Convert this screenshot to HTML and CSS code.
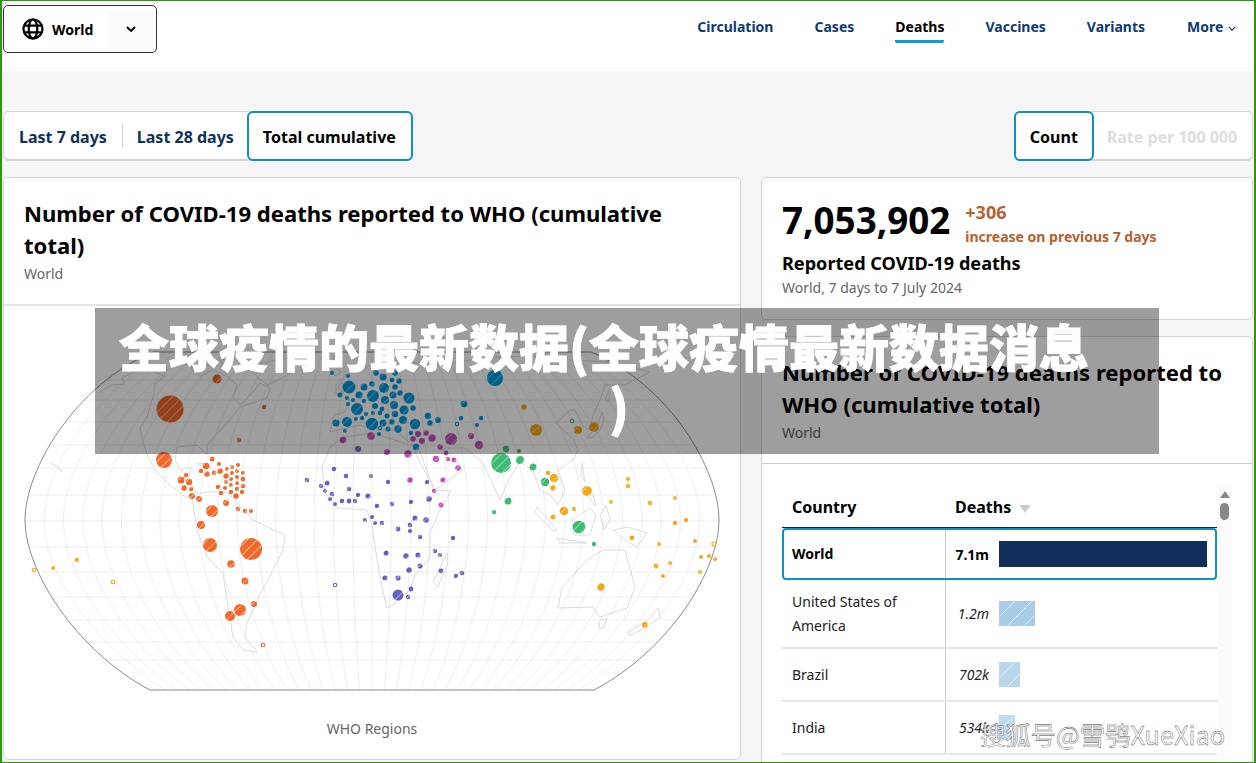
FILE: index.html
```html
<!DOCTYPE html>
<html lang="en">
<head>
<meta charset="utf-8">
<title>COVID-19 deaths</title>
<link rel="stylesheet" href="styles.css">
</head>
<body>
<div class="frame">
  <header class="topbar">
    <div class="select">
      <svg class="globe" viewBox="0 0 22 22" width="22" height="22"><circle cx="11" cy="11" r="9.5"/><ellipse cx="11" cy="11" rx="4.3" ry="9.5"/><path d="M2 7.7h18M2 14.3h18"/></svg>
      <span class="select-label">World</span>
      <span class="select-btn"><svg class="chev" viewBox="0 0 10 6" width="10" height="6"><path d="M1 1l4 4 4-4"/></svg></span>
    </div>
    <nav class="nav">
      <a class="nav-item">Circulation</a>
      <a class="nav-item">Cases</a>
      <a class="nav-item active">Deaths</a>
      <a class="nav-item">Vaccines</a>
      <a class="nav-item">Variants</a>
      <a class="nav-item">More <svg class="chev small" viewBox="0 0 10 6" width="8" height="5"><path d="M1 1l4 4 4-4"/></svg></a>
    </nav>
  </header>
  <main class="main">
    <div class="controls">
      <div class="seg">
        <span class="seg-item link">Last 7 days</span>
        <span class="seg-sep"></span>
        <span class="seg-item link second">Last 28 days</span>
        <span class="seg-item on total">Total cumulative</span>
      </div>
      <div class="seg">
        <span class="seg-item on count">Count</span>
        <span class="seg-item off">Rate per 100 000</span>
      </div>
    </div>
    <div class="columns">
      <section class="card map-card">
        <div class="card-head">
          <h2 class="card-title">Number of COVID-19 deaths reported to WHO (cumulative total)</h2>
          <p class="card-sub">World</p>
        </div>
        <svg class="map" viewBox="4 306 736 410" width="736" height="410">
          <defs>
            <clipPath id="globe-clip"><path d="M153 352H591C670 385 719 470 719 520S670 650 594 690H150C75 650 25 570 25 520S75 385 153 352Z"/></clipPath>
            <pattern id="amro" patternUnits="userSpaceOnUse" width="7" height="7" patternTransform="rotate(45)"><rect width="7" height="7" fill="#f26829"/><path d="M3.5 0V7" stroke="#fff" stroke-opacity=".55" stroke-width=".9"/></pattern>
            <pattern id="euro" patternUnits="userSpaceOnUse" width="7" height="7" patternTransform="rotate(45)"><rect width="7" height="7" fill="#009ade"/><path d="M3.5 0V7" stroke="#fff" stroke-opacity=".45" stroke-width=".9"/></pattern>
            <pattern id="emro" patternUnits="userSpaceOnUse" width="7" height="7" patternTransform="rotate(45)"><rect width="7" height="7" fill="#c04ebb"/><path d="M3.5 0V7" stroke="#fff" stroke-opacity=".45" stroke-width=".9"/></pattern>
            <pattern id="afro" patternUnits="userSpaceOnUse" width="7" height="7" patternTransform="rotate(45)"><rect width="7" height="7" fill="#6460c4"/><path d="M3.5 0V7" stroke="#fff" stroke-opacity=".5" stroke-width=".9"/></pattern>
            <pattern id="searo" patternUnits="userSpaceOnUse" width="7" height="7" patternTransform="rotate(45)"><rect width="7" height="7" fill="#3dbb72"/><path d="M3.5 0V7" stroke="#fff" stroke-opacity=".5" stroke-width=".9"/></pattern>
            <pattern id="wpro" patternUnits="userSpaceOnUse" width="7" height="7" patternTransform="rotate(45)"><rect width="7" height="7" fill="#f6a81c"/><path d="M3.5 0V7" stroke="#fff" stroke-opacity=".45" stroke-width=".9"/></pattern>
          </defs>
          <g clip-path="url(#globe-clip)">
            <path class="grid" d="M25 380H719M25 400H719M25 422H719M25 445H719M25 468H719M25 495H719M25 521H719M25 547H719M25 572H719M25 597H719M25 620H719M25 642H719M25 660H719"/>
            <g class="grid" transform="translate(372 520)">
              <path d="M0-168V170"/>
              <g id="meridians">
                <path d="M12.2-168C16.7-120 19.3-50 19.3 0S16.7 120 12.2 170"/>
                <path d="M24.3-168C33.3-120 38.6-50 38.6 0S33.3 120 24.3 170"/>
                <path d="M36.5-168C50-120 57.8-50 57.8 0S50 120 36.5 170"/>
                <path d="M48.7-168C66.7-120 77.1-50 77.1 0S66.7 120 48.7 170"/>
                <path d="M60.9-168C83.4-120 96.4-50 96.4 0S83.4 120 60.9 170"/>
                <path d="M73-168C100-120 115.7-50 115.7 0S100 120 73 170"/>
                <path d="M85.2-168C116.7-120 135-50 135 0S116.7 120 85.2 170"/>
                <path d="M97.4-168C133.4-120 154.2-50 154.2 0S133.4 120 97.4 170"/>
                <path d="M109.5-168C150-120 173.5-50 173.5 0S150 120 109.5 170"/>
                <path d="M121.7-168C166.7-120 192.8-50 192.8 0S166.7 120 121.7 170"/>
                <path d="M133.9-168C183.4-120 212.1-50 212.1 0S183.4 120 133.9 170"/>
                <path d="M146-168C200-120 231.4-50 231.4 0S200 120 146 170"/>
                <path d="M158.2-168C216.7-120 250.6-50 250.6 0S216.7 120 158.2 170"/>
                <path d="M170.4-168C233.4-120 269.9-50 269.9 0S233.4 120 170.4 170"/>
                <path d="M182.6-168C250-120 289.2-50 289.2 0S250 120 182.6 170"/>
                <path d="M194.7-168C266.7-120 308.5-50 308.5 0S266.7 120 194.7 170"/>
                <path d="M206.9-168C283.4-120 327.8-50 327.8 0S283.4 120 206.9 170"/>
              </g>
              <use href="#meridians" transform="scale(-1 1)"/>
            </g>
          </g>
          <path class="outline" d="M153 352H591C670 385 719 470 719 520S670 650 594 690H150C75 650 25 570 25 520S75 385 153 352Z"/>
          <g class="land">
            <path d="M100 392L112 385 125 384 122 378 135 371 150 370 165 376 155 384 153 397 147 417 140 428 143 442 148 457 157 472 170 485 185 497 192 498 197 530 207 557 223 573 227 600 233 637 243 650 257 652 245 637 247 623 257 600 268 580 283 550 285 535 253 520 227 492 207 492 197 494 188 480 191 467 180 470 175 460 177 447 197 445 207 455 207 445 227 423 240 407 267 398 270 388 260 383 253 392 240 405 233 397 237 385 225 375 213 370 200 376 185 362 170 365"/>
            <path d="M198 464L205 463 212 468 204 467ZM213 470L221 471 218 474ZM250 365L290 358 293 372 268 385 258 378ZM180 362L205 358 215 364 195 368ZM220 360L240 358 244 368 226 368ZM56 466L62 470 61 472M56 466L50 463"/>
            <path d="M322 467L330 447 345 437 372 433 395 440 415 447 420 452 434 490 451 491 440 510 430 533 430 558 415 575 410 590 393 605 387 608 382 587 375 547 372 525 367 510 337 508 325 493Z"/>
            <path d="M330 432L334 415 345 412 350 400 338 388 345 375 372 365 395 360 440 366 480 358 530 356 570 360 610 362 650 372 625 385 605 385 600 400 593 415 590 430 583 426 575 410 570 410 556 423 574 440 578 450 573 460 558 470 565 490 558 505 550 495 540 490 533 470 520 462 510 477 500 500 483 463 465 448 440 448 453 457 463 470 435 490 415 453 415 447 395 430 372 430 360 425Z"/>
            <path d="M587 437L596 428 602 412 604 420 600 430 592 438ZM605 400L609 390 609 402ZM447 553L433 582 438 587 448 563ZM562 587L587 560 603 550 625 550 635 587 627 608 600 617 593 607 558 608ZM600 620L607 619 604 628 599 628ZM658 608L660 618 650 624 630 636 628 632 648 620ZM537 507L557 530 553 531 535 512ZM557 538L587 543 560 543ZM572 520L590 508 596 515 590 535 574 535ZM600 515L606 505 610 520 604 530ZM613 530L628 527 647 533 637 547 622 538ZM581 475L582 463 585 482ZM585 490L593 494 596 506 590 500ZM506 498L510 502 507 505ZM336 385L341 378 344 392 336 394ZM330 372L337 369 341 372 336 376Z"/>
          </g>
          <g fill="url(#amro)">
            <circle cx="217" cy="379" r="4.5"/><circle cx="170" cy="409" r="13.5"/><circle cx="264" cy="407" r="2.2"/><circle cx="239" cy="440" r="2.2"/><circle cx="164" cy="460" r="8"/><circle cx="212" cy="459" r="2.5"/><circle cx="219" cy="464" r="2"/><circle cx="206" cy="466" r="3.3"/><circle cx="238" cy="465" r="2"/><circle cx="232" cy="467" r="2"/><circle cx="227" cy="469" r="2"/><circle cx="201" cy="471" r="2.2"/><circle cx="220" cy="471" r="2.7"/><circle cx="237" cy="471" r="2"/><circle cx="243" cy="473" r="2"/><circle cx="207" cy="474" r="2.7"/><circle cx="214" cy="473" r="2.3"/><circle cx="226" cy="476" r="2.7"/><circle cx="232" cy="473" r="2"/><circle cx="237" cy="477" r="2"/><circle cx="231" cy="479" r="2"/><circle cx="243" cy="479" r="2.3"/><circle cx="186" cy="475" r="2.3"/><circle cx="181" cy="480" r="3.5"/><circle cx="189" cy="482" r="3.2"/><circle cx="226" cy="482" r="2"/><circle cx="237" cy="483" r="2"/><circle cx="231" cy="485" r="2"/><circle cx="243" cy="486" r="2.3"/><circle cx="184" cy="488" r="2.7"/><circle cx="191" cy="489" r="2.2"/><circle cx="218" cy="487" r="2.3"/><circle cx="225" cy="488" r="2"/><circle cx="237" cy="489" r="2.2"/><circle cx="231" cy="492" r="2.2"/><circle cx="242" cy="492" r="2.2"/><circle cx="221" cy="493" r="2.2"/><circle cx="236" cy="496" r="2.7"/><circle cx="192" cy="496" r="3"/><circle cx="199" cy="499" r="3"/><circle cx="226" cy="503" r="3"/><circle cx="212" cy="511" r="6"/><circle cx="238" cy="509" r="2.3"/><circle cx="245" cy="511" r="2.2"/><circle cx="251" cy="511" r="2"/><circle cx="201" cy="525" r="4"/><circle cx="210" cy="545" r="7"/><circle cx="251" cy="549" r="11"/><circle cx="231" cy="564" r="3.7"/><circle cx="245" cy="581" r="3.5"/><circle cx="254" cy="604" r="3"/><circle cx="240" cy="610" r="6"/><circle cx="230" cy="616" r="5"/>
          </g>
          <g fill="url(#afro)">
            <circle cx="358" cy="449" r="3"/><circle cx="334" cy="469" r="2.3"/><circle cx="346" cy="476" r="2.3"/><circle cx="371" cy="476" r="2"/><circle cx="307" cy="480" r="2.3"/><circle cx="327" cy="483" r="2.5"/><circle cx="321" cy="486" r="2.2"/><circle cx="349" cy="489" r="2.3"/><circle cx="325" cy="491" r="2"/><circle cx="332" cy="494" r="2.3"/><circle cx="358" cy="495" r="2.2"/><circle cx="368" cy="496" r="2.6"/><circle cx="330" cy="499" r="2"/><circle cx="342" cy="501" r="2.3"/><circle cx="349" cy="501" r="2.4"/><circle cx="355" cy="501" r="2.2"/><circle cx="335" cy="504" r="2"/><circle cx="377" cy="506" r="2.3"/><circle cx="372" cy="517" r="2.1"/><circle cx="365" cy="520" r="2.1"/><circle cx="375" cy="523" r="2.1"/><circle cx="388" cy="482" r="2.2"/><circle cx="427" cy="482" r="2.2"/><circle cx="429" cy="499" r="2.8"/><circle cx="392" cy="504" r="2.2"/><circle cx="411" cy="502" r="2.2"/><circle cx="415" cy="518" r="2.6"/><circle cx="426" cy="520" r="2.8"/><circle cx="382" cy="523" r="2.2"/><circle cx="410" cy="525" r="2.3"/><circle cx="398" cy="529" r="2.4"/><circle cx="410" cy="531" r="2.1"/><circle cx="420" cy="537" r="2.3"/><circle cx="453" cy="538" r="2.2"/><circle cx="386" cy="553" r="2.5"/><circle cx="406" cy="556" r="2.7"/><circle cx="418" cy="555" r="2.6"/><circle cx="435" cy="551" r="2.2"/><circle cx="440" cy="555" r="2.1"/><circle cx="420" cy="566" r="2.5"/><circle cx="409" cy="570" r="2.8"/><circle cx="441" cy="571" r="2.4"/><circle cx="462" cy="573" r="2.3"/><circle cx="456" cy="576" r="2.2"/><circle cx="385" cy="578" r="2.6"/><circle cx="398" cy="578" r="2.6"/><circle cx="411" cy="589" r="2.4"/><circle cx="398" cy="595" r="5.5"/><circle cx="408" cy="597" r="2.2"/>
          </g>
          <g fill="url(#emro)">
            <circle cx="387" cy="452" r="3"/><circle cx="408" cy="454" r="3.7"/><circle cx="436" cy="459" r="3.2"/><circle cx="448" cy="459" r="2.2"/><circle cx="454" cy="460" r="2.5"/><circle cx="458" cy="468" r="2.8"/><circle cx="443" cy="480" r="2.6"/><circle cx="410" cy="480" r="2.8"/><circle cx="434" cy="491" r="2.2"/><circle cx="441" cy="505" r="2.5"/><circle cx="440" cy="447" r="2.7"/><circle cx="446" cy="453" r="2.4"/><circle cx="479" cy="445" r="4"/><circle cx="451" cy="439" r="6"/><circle cx="471" cy="436" r="3"/><circle cx="432" cy="438" r="3.7"/><circle cx="426" cy="433" r="2.7"/><circle cx="418" cy="434" r="3"/><circle cx="413" cy="439" r="2.8"/><circle cx="422" cy="441" r="3"/><circle cx="371" cy="436" r="3.7"/><circle cx="343" cy="440" r="3.3"/>
          </g>
          <g fill="url(#euro)">
            <circle cx="332" cy="373" r="2"/><circle cx="348" cy="376" r="2"/><circle cx="376" cy="373" r="2.8"/><circle cx="383" cy="377" r="3.5"/><circle cx="395" cy="373" r="2.8"/><circle cx="392" cy="380" r="2.3"/><circle cx="399" cy="381" r="2.7"/><circle cx="349" cy="387" r="6.5"/><circle cx="364" cy="387" r="3.5"/><circle cx="372" cy="384" r="2.7"/><circle cx="384" cy="388" r="5"/><circle cx="395" cy="387" r="2.8"/><circle cx="400" cy="393" r="2.7"/><circle cx="409" cy="398" r="5.5"/><circle cx="359" cy="395" r="3.5"/><circle cx="373" cy="396" r="6"/><circle cx="393" cy="395" r="3.5"/><circle cx="340" cy="395" r="2.5"/><circle cx="347" cy="398" r="2.1"/><circle cx="353" cy="400" r="2"/><circle cx="364" cy="401" r="2.2"/><circle cx="385" cy="400" r="4"/><circle cx="375" cy="406" r="3"/><circle cx="348" cy="404" r="2.1"/><circle cx="357" cy="409" r="6"/><circle cx="394" cy="405" r="4"/><circle cx="413" cy="408" r="2.8"/><circle cx="404" cy="410" r="4.5"/><circle cx="382" cy="409" r="2.4"/><circle cx="373" cy="413" r="2.1"/><circle cx="366" cy="414" r="2"/><circle cx="387" cy="416" r="2.5"/><circle cx="395" cy="414" r="3.2"/><circle cx="380" cy="413" r="2.2"/><circle cx="362" cy="418" r="2.2"/><circle cx="356" cy="419" r="2"/><circle cx="403" cy="420" r="4"/><circle cx="428" cy="416" r="3.2"/><circle cx="383" cy="423" r="3.4"/><circle cx="392" cy="422" r="2.7"/><circle cx="336" cy="423" r="3.5"/><circle cx="347" cy="422" r="5"/><circle cx="372" cy="424" r="6.2"/><circle cx="415" cy="424" r="5.2"/><circle cx="430" cy="423" r="2.7"/><circle cx="438" cy="420" r="2.9"/><circle cx="398" cy="429" r="3.7"/><circle cx="388" cy="429" r="2.5"/><circle cx="345" cy="431" r="2"/><circle cx="411" cy="433" r="2.2"/><circle cx="379" cy="434" r="2.1"/><circle cx="416" cy="447" r="3.2"/><circle cx="464" cy="404" r="3.3"/><circle cx="461" cy="418" r="2.2"/><circle cx="481" cy="418" r="2.2"/><circle cx="477" cy="425" r="2"/><circle cx="495" cy="378" r="8"/>
          </g>
          <g fill="url(#searo)">
            <circle cx="506" cy="449" r="3.2"/><circle cx="519" cy="451" r="2"/><circle cx="501" cy="463" r="10"/><circle cx="520" cy="460" r="4"/><circle cx="533" cy="467" r="3.5"/><circle cx="545" cy="482" r="4.2"/><circle cx="508" cy="501" r="3.5"/><circle cx="494" cy="512" r="2.3"/><circle cx="579" cy="527" r="6.3"/><circle cx="594" cy="544" r="2.2"/>
          </g>
          <g fill="url(#wpro)">
            <circle cx="524" cy="407" r="2.7"/><circle cx="536" cy="430" r="6"/><circle cx="578" cy="430" r="4"/><circle cx="594" cy="427" r="5"/><circle cx="548" cy="473" r="2.3"/><circle cx="554" cy="478" r="4.3"/><circle cx="553" cy="488" r="2.7"/><circle cx="587" cy="491" r="5"/><circle cx="564" cy="511" r="4.3"/><circle cx="574" cy="509" r="2.2"/><circle cx="553" cy="517" r="2.5"/><circle cx="611" cy="502" r="2.1"/><circle cx="628" cy="479" r="2"/><circle cx="628" cy="486" r="2.3"/><circle cx="650" cy="503" r="2.3"/><circle cx="675" cy="498" r="2.1"/><circle cx="675" cy="523" r="2.2"/><circle cx="686" cy="520" r="2.2"/><circle cx="632" cy="538" r="2.4"/><circle cx="659" cy="544" r="2.1"/><circle cx="695" cy="541" r="2.1"/><circle cx="701" cy="557" r="2.1"/><circle cx="709" cy="556" r="2.1"/><circle cx="715" cy="559" r="2.1"/><circle cx="656" cy="566" r="2.5"/><circle cx="670" cy="563" r="2.1"/><circle cx="700" cy="572" r="2.1"/><circle cx="663" cy="576" r="2.1"/><circle cx="601" cy="587" r="3.8"/><circle cx="645" cy="625" r="3"/><circle cx="53" cy="568" r="2"/><circle cx="77" cy="560" r="2.3"/>
          </g>
          <g class="rings">
            <circle class="r-wpro" cx="34" cy="570" r="1.8"/><circle class="r-wpro" cx="113" cy="582" r="1.8"/><circle class="r-wpro" cx="714" cy="544" r="2"/>
            <circle class="r-amro" cx="263" cy="645" r="1.8"/><circle class="r-afro" cx="335" cy="585" r="1.8"/>
            <circle class="r-searo" cx="572" cy="421" r="1.8"/><circle class="r-euro" cx="380" cy="428" r="1.6"/><circle class="r-euro" cx="457" cy="424" r="1.7"/>
          </g>
        </svg>
        <p class="map-caption">WHO Regions</p>
      </section>
      <div class="side">
        <section class="card stat-card">
          <div class="stat-top">
            <span class="stat-num">7,053,902</span>
            <div class="stat-delta">
              <span class="delta-num">+306</span>
              <span class="delta-text">increase on previous 7 days</span>
            </div>
          </div>
          <h3 class="stat-title">Reported COVID-19 deaths</h3>
          <p class="card-sub stat-sub">World, 7 days to 7 July 2024</p>
        </section>
        <section class="card table-card">
          <div class="card-head side-head">
            <h2 class="card-title">Number of COVID-19 deaths reported to WHO (cumulative total)</h2>
            <p class="card-sub">World</p>
          </div>
          <div class="table-wrap">
            <div class="table">
              <div class="thead">
                <span class="th">Country</span>
                <span class="th th-deaths">Deaths <i class="sort"></i></span>
              </div>
              <div class="row row-world">
                <span class="cell-name strong">World</span>
                <span class="cell-val strong"><b class="val">7.1m</b><i class="bar bar-dark"></i></span>
              </div>
              <div class="row row-us">
                <span class="cell-name">United States of America</span>
                <span class="cell-val"><em class="val">1.2m</em><i class="bar bar-us"></i></span>
              </div>
              <div class="row">
                <span class="cell-name">Brazil</span>
                <span class="cell-val"><em class="val">702k</em><i class="bar bar-br"></i></span>
              </div>
              <div class="row">
                <span class="cell-name">India</span>
                <span class="cell-val"><em class="val">534k</em><i class="bar bar-in"></i></span>
              </div>
            </div>
            <div class="scrollbar"><i class="scroll-up"></i><i class="scroll-thumb"></i></div>
          </div>
        </section>
      </div>
    </div>
  </main>
  <div class="banner">
    <h1 class="banner-title">全球疫情的最新数据(全球疫情最新数据消息<span class="banner-paren">)</span></h1>
  </div>
  <div class="watermark">搜狐号@雪鸮XueXiao</div>
</div>
</body>
</html>
```
FILE: styles.css
```css
* { box-sizing: border-box; }
html, body { margin: 0; padding: 0; }
body { font-family: "Noto Sans", "Noto Sans CJK SC", sans-serif; color: #000; background: #fff; }
h1, h2, h3, p { margin: 0; }
i, em { font-style: normal; }

.frame {
  position: relative;
  width: 1256px;
  height: 763px;
  overflow: hidden;
  border: 1px solid #2a9a0c;
  border-left-width: 2px;
  border-right-width: 2px;
  display: flex;
  flex-direction: column;
}

/* top bar */
.topbar {
  flex: none;
  height: 70px;
  background: #fff;
  display: flex;
  justify-content: space-between;
  align-items: flex-start;
  padding: 4px 18px 0 1px;
}
.select {
  width: 154px;
  height: 48px;
  border: 1px solid #333;
  border-radius: 5px;
  display: flex;
  align-items: center;
  padding: 4px 3px 4px 18px;
}
.globe { fill: none; stroke: #000; stroke-width: 2.2; flex: none; }
.select-label { margin-left: 8px; font-size: 14px; font-weight: 700; flex: 1; }
.select-btn {
  width: 45px;
  height: 38px;
  background: #fafafa;
  display: flex;
  align-items: center;
  justify-content: center;
}
.chev { fill: none; stroke: #000; stroke-width: 1.8; }
.chev.small { stroke: #0d3b75; stroke-width: 1.5; margin-left: 1px; vertical-align: 1px; }
.nav { display: flex; gap: 41px; padding-top: 12px; }
.nav-item {
  font-size: 14px;
  font-weight: 700;
  line-height: 20px;
  color: #0d3b75;
  padding-bottom: 3px;
  border-bottom: 3px solid transparent;
}
.nav-item:last-child { margin-left: 1px; }
.nav-item.active { color: #000; border-bottom-color: #0a9bdc; border-radius: 0 0 2px 2px; }

/* main */
.main { flex: 1; min-height: 0; background: #f5f5f5; padding: 40px 1px 0 1px; }
.controls { display: flex; justify-content: space-between; height: 50px; }
.seg {
  display: flex;
  align-items: stretch;
  background: #fff;
  border: 1px solid #d4d4d4;
  border-bottom-width: 2px;
  border-radius: 6px;
}
.seg-item {
  font-size: 16px;
  font-weight: 700;
  line-height: 50px;
  padding: 0 14px;
  white-space: nowrap;
}
.seg-item.link { color: #10305c; }
.seg-item.link:first-child { padding: 0 15px; }
.seg-item.second { padding-right: 13px; }
.seg-item.off { color: #dcdde3; padding: 0 15px 0 14px; letter-spacing: -0.04px; }
.seg-item.on {
  color: #000;
  background: #fff;
  border: 2px solid #0f8fc8;
  border-radius: 6px;
  margin: -1px -1px -2px 0;
  line-height: 48px;
  padding: 0 14px;
}
.seg-item.total { padding-right: 15px; }
.seg-item.count { margin-left: -1px; }
.seg-sep { width: 1px; margin: 11px 0; background: #d4d4d4; }

.columns { display: grid; grid-template-columns: 738px 492px; gap: 20px; margin-top: 16px; }
.card {
  background: #fff;
  border: 1px solid #d4d4d4;
  border-radius: 5px;
}
.card-head { padding: 19px 20px 20px; border-bottom: 2px solid #e4e4e4; }
.card-title { font-size: 22.08px; font-weight: 700; line-height: 32px; }
.card-sub { font-size: 14px; line-height: 20px; color: #666; margin-top: 3px; }

.map-card { height: 583px; }
.map { display: block; }
.map-caption { text-align: center; font-size: 14px; line-height: 20px; color: #666; margin-top: 3px; }
.grid { fill: none; stroke: #eee; stroke-width: 1; }
.outline { fill: none; stroke: #8a8a8a; stroke-width: 1; }
.land { fill: none; stroke: #dcdcdc; stroke-width: 1; stroke-linejoin: round; }
.rings { fill: #fff; stroke-width: 1.1; }
.r-wpro { stroke: #f6a81c; }
.r-amro { stroke: #f26829; }
.r-afro { stroke: #6460c4; }
.r-searo { stroke: #3dbb72; }
.r-euro { stroke: #009ade; }

.side { display: flex; flex-direction: column; gap: 16px; min-width: 0; }
.stat-card { height: 143px; padding: 20px 20px 0; }
.stat-top { display: flex; align-items: flex-start; gap: 15px; }
.stat-num { font-size: 36.8px; font-weight: 700; line-height: 44px; }
.stat-delta { display: flex; flex-direction: column; color: #b8602f; font-weight: 700; padding-top: 2px; }
.delta-num { font-size: 18px; line-height: 25px; }
.delta-text { font-size: 14px; line-height: 23px; }
.stat-title { font-size: 18.1px; font-weight: 700; line-height: 26px; margin-top: 2px; }
.stat-sub { margin-top: 2px; }

.table-card { height: 440px; }
.side-head { padding: 19px 20px 20px; border-bottom-width: 1px; border-bottom-color: #ccc; }
.table-wrap { display: flex; align-items: flex-start; padding: 22px 0 0 20px; }
.table { width: 435px; flex: none; }
.thead { display: grid; grid-template-columns: 163px 1fr; height: 42px; border-bottom: 1px solid #222; align-items: center; }
.th { font-size: 16px; font-weight: 700; padding-left: 10px; }
.sort {
  display: inline-block;
  width: 0;
  height: 0;
  border-left: 6px solid transparent;
  border-right: 6px solid transparent;
  border-top: 8px solid #ccc;
  margin-left: 4px;
}
.row {
  display: grid;
  grid-template-columns: 163px 1fr;
  height: 53px;
  border-bottom: 2px solid #e6e6e6;
  font-size: 14px;
}
.row-us { height: 69px; }
.row-world {
  grid-template-columns: 161px 1fr;
  height: 52px;
  border: 2px solid #0f8fc8;
  border-radius: 4px;
}
.cell-name { padding-left: 10px; line-height: 24px; align-self: center; color: #222; }
.row-world .cell-name { padding-left: 8px; }
.cell-name.strong, .cell-val.strong { font-weight: 700; color: #000; }
.cell-val {
  display: flex;
  align-items: center;
  border-left: 1px solid #ccc;
  height: 100%;
  gap: 10px;
}
.val { width: 43px; text-align: right; font-weight: inherit; flex: none; }
em.val { font-style: italic; color: #222; }
.bar { display: block; height: 25px; }
.bar-dark { width: 208px; height: 26px; background: #0f2e5c; }
.bar-us { width: 36px; background: repeating-linear-gradient(135deg, #a8cde5 0 11px, #d8e8f3 11px 12px); }
.bar-br { width: 21px; background: repeating-linear-gradient(135deg, #b9d6ea 0 11px, #e0edf6 11px 12px); }
.bar-in { width: 16px; background: repeating-linear-gradient(135deg, #c0dbed 0 11px, #e4f0f8 11px 12px); }

.scrollbar {
  width: 15px;
  height: 262px;
  margin-top: -2px;
  background: #fbfbfb;
  display: flex;
  flex-direction: column;
  align-items: center;
  padding-top: 7px;
}
.scroll-up {
  width: 0;
  height: 0;
  border-left: 5px solid transparent;
  border-right: 5px solid transparent;
  border-bottom: 7px solid #888;
}
.scroll-thumb { width: 9px; height: 17px; margin-top: 5px; border-radius: 5px; background: #888; }

/* overlays */
.banner {
  position: absolute;
  left: 93px;
  top: 307px;
  width: 1064px;
  height: 146px;
  background: rgba(0, 0, 0, 0.38);
  padding: 7px 40px 0 24px;
}
.banner-title {
  font-family: "Noto Sans CJK SC", sans-serif;
  font-size: 50px;
  font-weight: 900;
  line-height: 60px;
  color: #fff;
  white-space: nowrap;
  -webkit-text-stroke: 0.8px #fff;
}
.banner-paren { display: block; text-align: center; }
.watermark {
  position: absolute;
  right: 29px;
  bottom: 13px;
  font-family: "Noto Sans CJK SC", sans-serif;
  font-size: 25.3px;
  line-height: 30px;
  color: #fff;
  -webkit-text-stroke: 0.4px #444;
}
```
